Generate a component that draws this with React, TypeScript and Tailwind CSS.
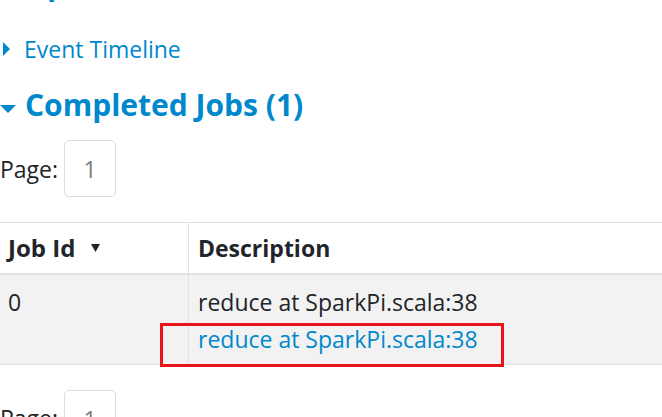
import React from "react";

export default function App() {
  return (
    <div className="w-[662px] h-[417px] overflow-hidden bg-white relative font-['Open_Sans',sans-serif] text-[#212529]">
      <div className="h-[4px] overflow-hidden relative">
        <span className="absolute left-[47px] top-[-31px] text-[30px] leading-[30px] font-bold text-[#0088cc]">p</span>
      </div>

      <div className="mt-[31px] flex items-center h-[28px] text-[#0088cc]">
        <svg width="8" height="14" viewBox="0 0 8 14" className="ml-[3px]">
          <polygon points="0,0 7,7 0,14" fill="#0088cc" />
        </svg>
        <span className="ml-[13px] text-[23px] leading-[28px]">Event Timeline</span>
      </div>

      <div className="mt-[24px] flex items-center h-[36px] text-[#0088cc]">
        <svg width="17" height="8" viewBox="0 0 17 8" className="mt-[8px]">
          <polygon points="0,0 16,0 8,8" fill="#0088cc" />
        </svg>
        <span className="ml-[8px] text-[30px] leading-[36px] font-bold">Completed Jobs (1)</span>
      </div>

      <div className="mt-[17px] flex items-center h-[57px]">
        <span className="text-[23px] leading-[28px]">Page:</span>
        <div className="ml-[6px] w-[52px] h-[57px] border border-[#dddddd] rounded-[5px] flex items-center justify-center text-[23px] leading-[28px] text-[#7a7a7a]">
          1
        </div>
      </div>

      <div className="mt-[25px] border-t border-[#dee2e6] relative">
        <div className="flex h-[52px] border-b-2 border-[#dee2e6]">
          <div className="w-[189px] border-r border-[#dee2e6] flex items-center pl-[8px]">
            <span className="text-[24px] leading-[28px] font-bold">Job Id</span>
            <svg width="10" height="8" viewBox="0 0 10 8" className="ml-[16px]">
              <polygon points="0,0 9,0 4.5,8" fill="#212529" />
            </svg>
          </div>
          <div className="flex-1 flex items-center pl-[9px]">
            <span className="text-[23px] leading-[28px] font-bold">Description</span>
          </div>
        </div>
        <div className="flex h-[90px] bg-[#f2f2f2] border-b border-[#dee2e6]">
          <div className="w-[189px] border-r border-[#dee2e6] pl-[8px] pt-[13px]">
            <div className="text-[23px] leading-[28px]">0</div>
          </div>
          <div className="flex-1 pl-[9px] pt-[13px]">
            <div className="text-[23px] leading-[28px]">reduce at SparkPi.scala:38</div>
            <div className="mt-[9px] text-[23px] leading-[28px] text-[#0088cc]">reduce at SparkPi.scala:38</div>
          </div>
        </div>
        <div className="absolute left-[160px] top-[100px] w-[344px] h-[44px] border-[3px] border-[#e8141c]" />
      </div>

      <div className="mt-[25px] flex items-start h-[57px]">
        <span className="text-[23px] leading-[28px] mt-[14px]">Page:</span>
        <div className="ml-[6px] w-[52px] h-[57px] border border-[#dddddd] rounded-[5px] flex items-center justify-center text-[23px] leading-[28px] text-[#7a7a7a]">
          1
        </div>
      </div>
    </div>
  );
}
